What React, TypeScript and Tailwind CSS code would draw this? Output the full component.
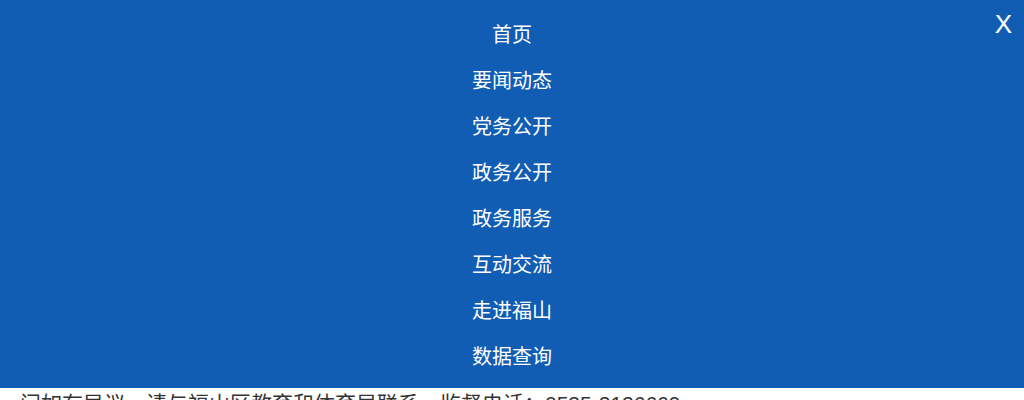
const items = ["首页", "要闻动态", "党务公开", "政务公开", "政务服务", "互动交流", "走进福山", "数据查询"];

export default function App() {
  return (
    <div className="relative h-[400px] w-[1024px] overflow-hidden bg-white font-['Liberation_Sans','Noto_Sans_CJK_SC',sans-serif]">
      <nav className="relative bg-[#115db3] pt-[12px] pb-[8px]">
        <ul className="flex flex-col items-center">
          {items.map((t) => (
            <li key={t} className="flex h-[46px] items-center text-[20px] leading-none text-white">
              {t}
            </li>
          ))}
        </ul>
        <button className="absolute right-[12px] top-[11px] text-[26px] leading-none text-white">X</button>
      </nav>
      <p className="whitespace-nowrap pl-[20px] pt-[1px] text-[21px] leading-[1.4] text-[#333]">
        问如有异议，请与福山区教育和体育局联系，监督电话：0535-2126669
      </p>
    </div>
  );
}
